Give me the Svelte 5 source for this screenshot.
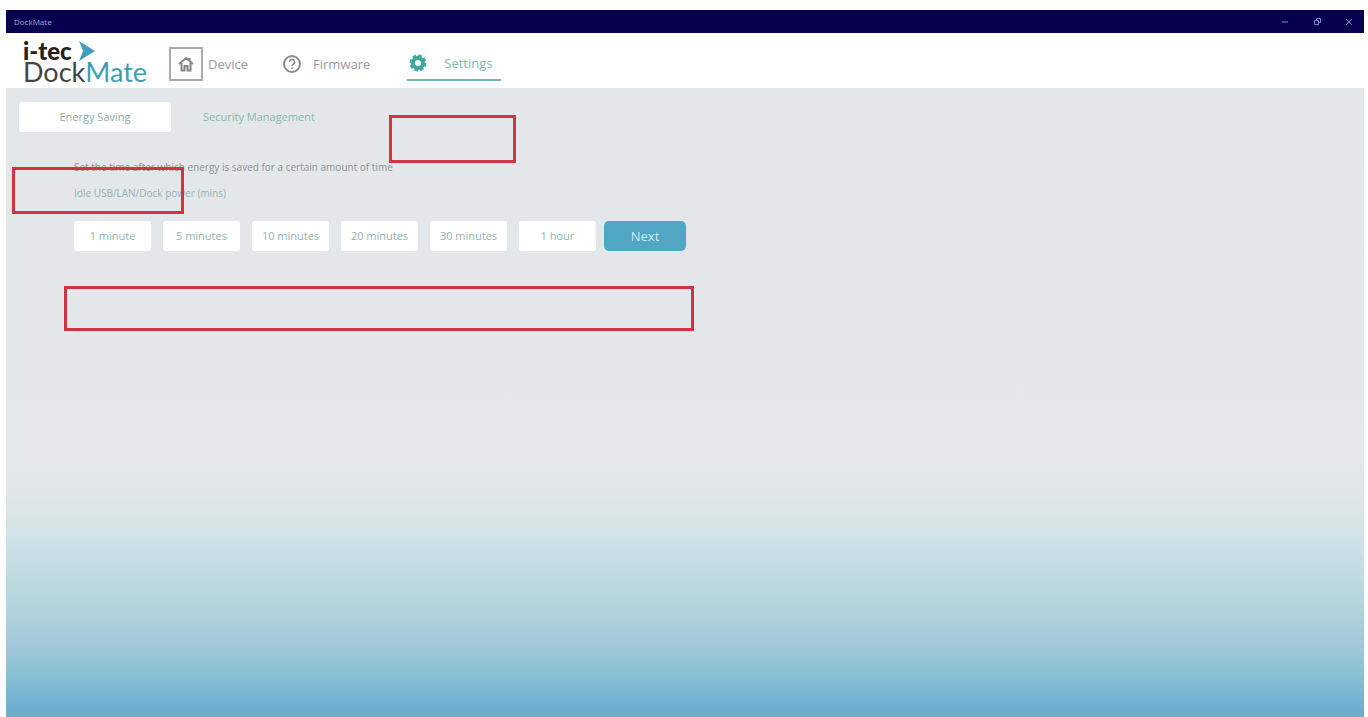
<script lang="ts">
  const times = ["1 minute", "5 minutes", "10 minutes", "20 minutes", "30 minutes", "1 hour"];

  let selected = "";
</script>

<div class="window">
  <div class="titlebar">
    <span class="title">DockMate</span>
    <button type="button" aria-label="Minimize">
      <svg width="10" height="10" viewBox="0 0 10 10"><path d="M2 5h6" /></svg>
    </button>
    <button type="button" aria-label="Restore">
      <svg width="10" height="10" viewBox="0 0 10 10"><path d="M2.500 3.500h4v4h-4zM4.500 3V1.500h4v4H7" /></svg>
    </button>
    <button type="button" aria-label="Close">
      <svg width="10" height="10" viewBox="0 0 10 10"><path d="M2 2l6 6M8 2l-6 6" /></svg>
    </button>
  </div>

  <header>
    <div class="logo">
      <div class="brand">
        <span>i-tec</span>
        <svg width="18" height="20" viewBox="0 0 18 20">
          <path d="M1 0l16 10L1 20l4-10z" fill="#3f9fc0" />
        </svg>
      </div>
      <div class="product">Dock<span>Mate</span></div>
    </div>
    <nav>
      <a href="#device" class="device">
        <span class="frame">
          <svg width="16" height="16" viewBox="0 0 16 16" fill="none" stroke="#858585" stroke-width="2">
            <path d="M1 8l7-6 7 6M3.500 7v7.500h3V10h3v4.500h3V7M11.500 2v3" />
          </svg>
        </span>
        Device
      </a>
      <a href="#firmware" class="firmware">
        <svg width="20" height="20" viewBox="0 0 20 20" fill="none" stroke="#8c8c8c" stroke-width="2">
          <circle cx="10" cy="10" r="8" />
          <path d="M7.500 8a2.500 2.500 0 1 1 3.500 2.300q-1 .5-1 1.700M10 13.500v1.500" stroke-width="1.500" />
        </svg>
        Firmware
      </a>
      <a href="#settings" class="settings">
        <svg width="18" height="18" viewBox="0 0 18 18" fill="none" stroke="#3ba99c">
          <circle cx="9" cy="9" r="5" stroke-width="4" />
          <circle cx="9" cy="9" r="7.500" stroke-width="2" stroke-dasharray="3.600 2.290" />
        </svg>
        Settings
      </a>
    </nav>
  </header>

  <main>
    <div class="tabs">
      <button type="button" class="tab active">Energy Saving</button>
      <button type="button" class="tab">Security Management</button>
    </div>

    <section>
      <p>Set the time after which energy is saved for a certain amount of time</p>
      <p class="hint">Idle USB/LAN/Dock power (mins)</p>
      <div class="actions">
        <div class="times">
          {#each times as time}
            <button type="button" class:selected={selected === time} on:click={() => (selected = time)}>{time}</button>
          {/each}
        </div>
        <button type="button" class="next">Next</button>
      </div>
    </section>

    <div class="mark mark-top"></div>
    <div class="mark mark-left"></div>
    <div class="mark mark-wide"></div>
  </main>
</div>

<style>
  :global(body) {
    background: #fff;
  }

  .window {
    box-sizing: border-box;
    min-height: 100vh;
    padding: 10px 4px 0 6px;
    display: flex;
    flex-direction: column;
    font-family: "Open Sans", "Noto Sans", sans-serif;
    font-size: 11px;
    line-height: 16px;
  }

  button {
    padding: 0;
    border: 0;
    background: none;
    font: inherit;
    cursor: pointer;
  }

  .titlebar {
    height: 23px;
    padding: 0 10px 0 8px;
    display: flex;
    align-items: center;
    gap: 22px;
    background: #07004f;
    color: #aaa6d0;
    font-size: 8px;
  }

  .title {
    flex: 1;
  }

  .titlebar button {
    display: flex;
  }

  .titlebar svg {
    fill: none;
    stroke: #8a85c0;
  }

  header {
    box-sizing: border-box;
    height: 55px;
    padding: 7px 0 0 17px;
    display: flex;
    align-items: center;
    background: #fff;
  }

  .logo {
    width: 146px;
    padding-bottom: 4px;
    font-family: Lato, sans-serif;
  }

  .brand {
    height: 20px;
    display: flex;
    align-items: center;
    gap: 6px;
    color: #222;
    font-size: 24px;
    font-weight: 900;
    line-height: 20px;
  }

  .product {
    color: #444;
    font-size: 27px;
    line-height: 22px;
  }

  .product span {
    color: #409db5;
  }

  nav {
    display: flex;
    align-items: center;
    font-size: 13px;
  }

  nav a {
    height: 32px;
    display: flex;
    align-items: center;
    color: #999;
    text-decoration: none;
  }

  .device {
    gap: 5px;
    margin-right: 34px;
  }

  .frame {
    width: 30px;
    height: 30px;
    border: 2px solid #aaa;
    display: flex;
    align-items: center;
    justify-content: center;
  }

  .firmware {
    gap: 11px;
    margin-right: 37px;
  }

  .settings {
    gap: 17px;
    padding: 0 8px 0 2px;
    border-bottom: 2px solid #75b5b9;
    color: #7db5b0;
  }

  main {
    position: relative;
    flex: 1;
    padding: 14px 13px;
    background: linear-gradient(
      #e4e7e9 0,
      #e4e8ea 60%,
      #dce6e6 67%,
      #cce0e7 73%,
      #b5d5dc 82%,
      #a4c9da 88%,
      #8ac1d4 93%,
      #6badd0 99%,
      #73a9c4
    );
  }

  .tabs {
    display: flex;
    gap: 32px;
  }

  .tab {
    height: 30px;
    color: #86b9b2;
  }

  .tab.active {
    width: 152px;
    border-radius: 3px;
    background: #fff;
    color: #8faaaa;
  }

  section {
    padding: 27px 0 0 55px;
  }

  p {
    margin: 0 0 10px;
    color: #8b9292;
    font-size: 10px;
  }

  .hint {
    margin-bottom: 20px;
    color: #8fb4b6;
  }

  .actions {
    display: flex;
    gap: 8px;
  }

  .times {
    display: flex;
    gap: 12px;
  }

  .times button {
    width: 77px;
    height: 30px;
    border-radius: 3px;
    background: #fff;
    color: #91b5ae;
  }

  .times button.selected {
    color: #3ba99c;
  }

  .next {
    width: 82px;
    height: 30px;
    border-radius: 5px;
    background: #50a6c4;
    color: #cdebf5;
    font-size: 13px;
  }

  .mark {
    position: absolute;
    box-sizing: border-box;
    border: 3px solid #d1343e;
    pointer-events: none;
  }

  .mark-top {
    top: 27px;
    left: 383px;
    width: 127px;
    height: 48px;
  }

  .mark-left {
    top: 79px;
    left: 6px;
    width: 172px;
    height: 47px;
  }

  .mark-wide {
    top: 198px;
    left: 58px;
    width: 630px;
    height: 45px;
  }
</style>
